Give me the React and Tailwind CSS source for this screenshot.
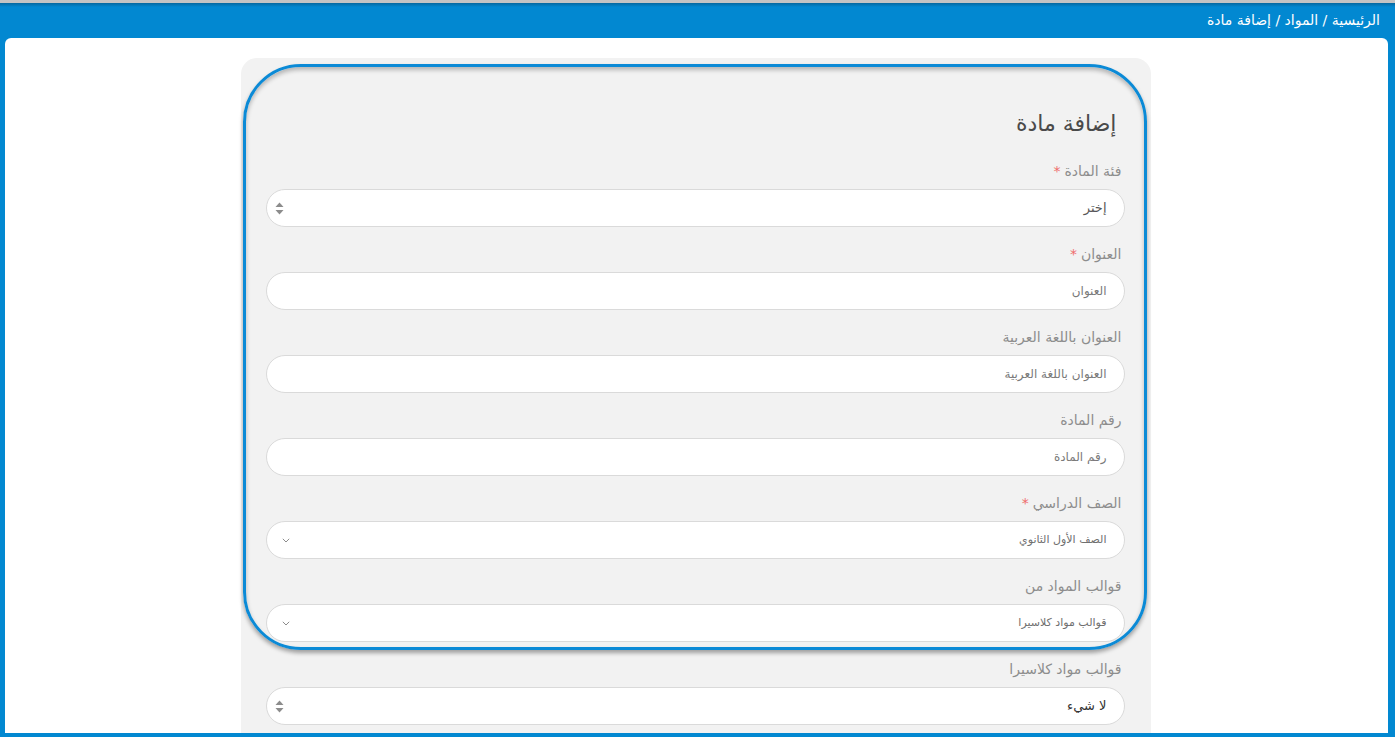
const fields = [
  { label: 'فئة المادة', required: true, kind: 'native', value: 'إختر', tone: 'text-[13px] text-[#555]' },
  { label: 'العنوان', required: true, kind: 'input', value: 'العنوان' },
  { label: 'العنوان باللغة العربية', kind: 'input', value: 'العنوان باللغة العربية' },
  { label: 'رقم المادة', kind: 'input', value: 'رقم المادة' },
  { label: 'الصف الدراسي', required: true, kind: 'chevron', value: 'الصف الأول الثانوي' },
  { label: 'قوالب المواد من', kind: 'chevron', value: 'قوالب مواد كلاسيرا' },
  { label: 'قوالب مواد كلاسيرا', kind: 'native', value: 'لا شيء', tone: 'text-[13px] text-[#333]' },
]

function UpDown() {
  return (
    <svg width="9" height="13" viewBox="0 0 9 13" className="shrink-0">
      <path d="M4.5 0.5 L8.5 5 H0.5 Z" fill="#8c8c8c" />
      <path d="M4.5 12.5 L8.5 8 H0.5 Z" fill="#8c8c8c" />
    </svg>
  )
}

function Chevron() {
  return (
    <svg width="8" height="5" viewBox="0 0 8 5" className="shrink-0">
      <path d="M0.8 0.8 L4 4 L7.2 0.8" fill="none" stroke="#8c8c8c" strokeWidth="1" />
    </svg>
  )
}

function Field({ f }) {
  const tone = f.tone || (f.kind === 'input' ? 'text-[12px] text-[#7a7a7a]' : 'text-[11px] text-[#6f6f6f]')
  return (
    <div className="mb-[17px]">
      <label className="mb-2 block pr-[3px] text-[14px] leading-5 text-[#8d8d8d]">
        {f.label}
        {f.required && <span className="mr-1 text-[#ef6b6b]">*</span>}
      </label>
      <div className="flex h-[38px] items-center justify-between rounded-full border border-[#dadada] bg-white pr-[17px] pl-[7px]">
        <span className={tone}>{f.value}</span>
        {f.kind === 'native' && <span className="ml-[1px] flex"><UpDown /></span>}
        {f.kind === 'chevron' && <span className="ml-[8px] flex"><Chevron /></span>}
      </div>
    </div>
  )
}

export default function App() {
  return (
    <div
      className="flex h-screen w-full flex-col overflow-hidden border-t-[3px] border-[#c4c4c4] bg-[#0288d1]"
      style={{ fontFamily: '"DejaVu Sans", "Noto Sans", sans-serif' }}
      dir="rtl"
    >
      <div className="h-[4px] bg-gradient-to-b from-[#0568a0] to-[#0288d1]" />
      <div className="flex h-[31px] items-start pr-[15px] pt-[3px] text-[14px] text-white">
        الرئيسية / المواد / إضافة مادة
      </div>
      <div className="mr-[7px] mb-[4px] ml-[5px] flex flex-1 justify-center overflow-hidden rounded-t-[6px] bg-white">
        <div className="relative mt-[20px] mr-[2px] h-fit w-[910px] rounded-t-[16px] bg-[#f2f2f2] pt-[51px] pr-[26px] pb-6 pl-[25px]">
          <h1 className="mb-[22px] pr-[8px] text-[22px] leading-[30px] font-normal text-[#4a4a4a]">إضافة مادة</h1>
          {fields.map((f, i) => (
            <Field key={i} f={f} />
          ))}
          <div className="pointer-events-none absolute top-[6px] left-[2px] h-[586px] w-[904px] rounded-[58px] border-[3px] border-[#0b8ad6] shadow-[0_3px_4px_rgba(0,0,0,0.35),inset_0_3px_4px_rgba(0,0,0,0.25)]" />
        </div>
      </div>
    </div>
  )
}
